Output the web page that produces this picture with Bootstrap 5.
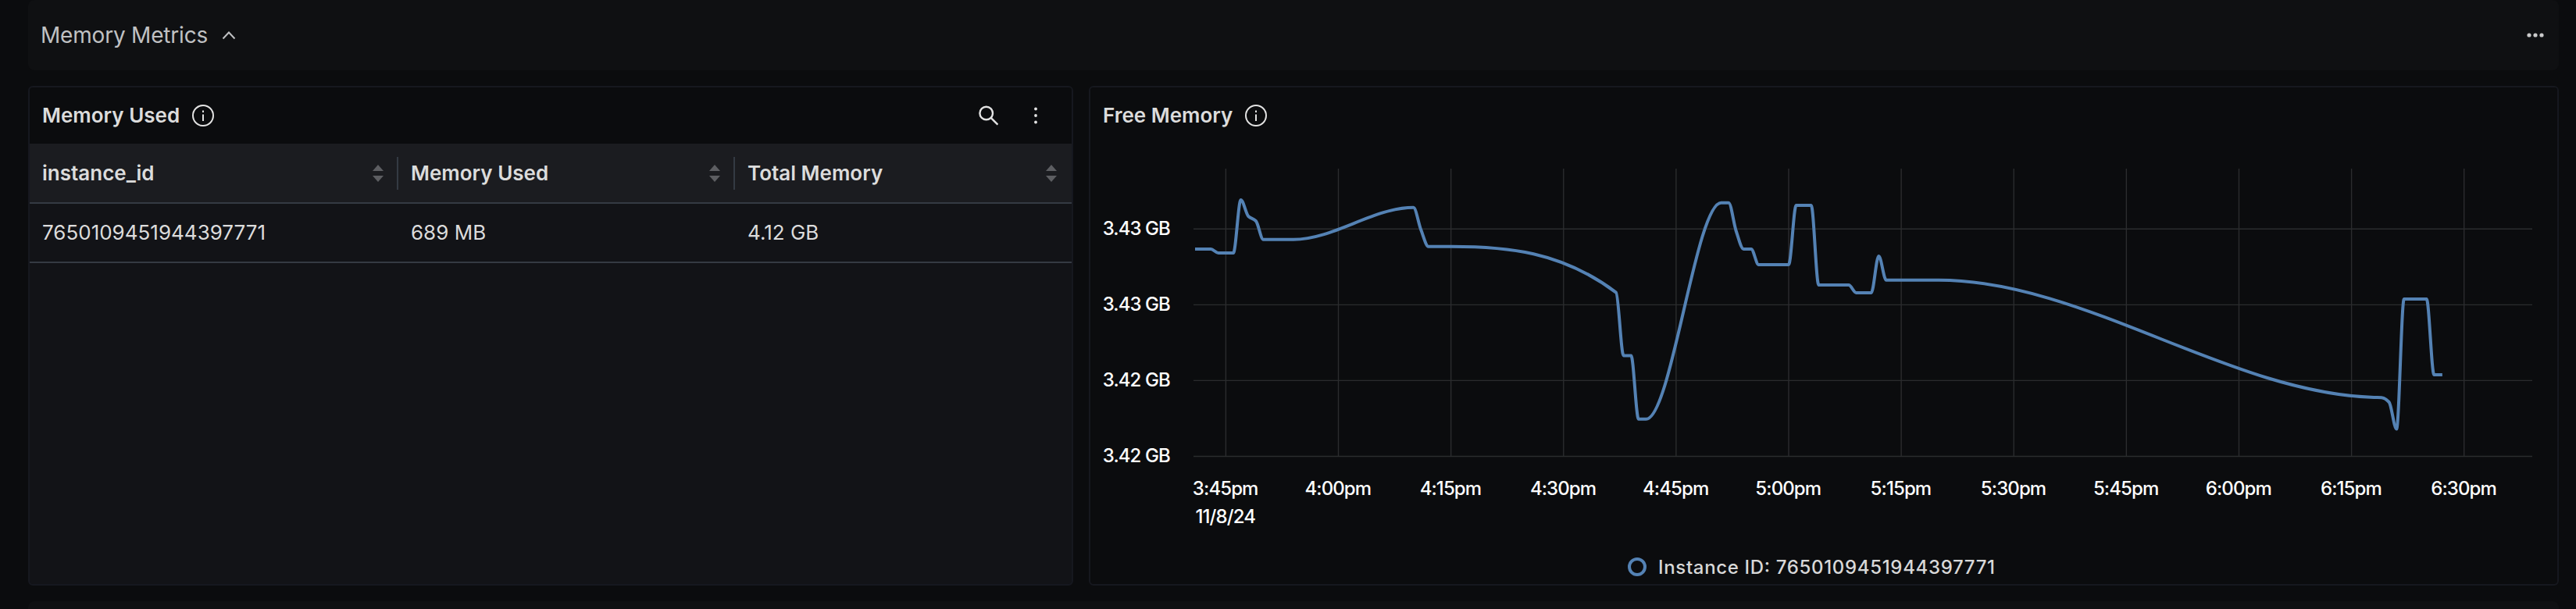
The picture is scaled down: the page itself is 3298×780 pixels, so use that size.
<!DOCTYPE html>
<html lang="en" data-bs-theme="dark">
<head>
<meta charset="utf-8">
<title>Memory Metrics</title>
<link rel="stylesheet" href="https://cdn.jsdelivr.net/npm/bootstrap@5.3.0/dist/css/bootstrap.min.css">
<style>
  body { background: #0b0c0e; color: #dcdcdc; font-family: Inter, "Liberation Sans", sans-serif; font-size: 26px; line-height: 32px; height: 780px; overflow: hidden; padding: 0 22px 0 36px; }
  .section-bar { height: 90px; background: #0f1012; border-radius: 8px; padding: 0 19px 0 16px; color: #c0c1c3; font-size: 28px; letter-spacing: -.2px; }
  .section-bar.next-bar { height: 10px; padding: 0; border-radius: 8px 8px 0 0; }
  .panels { height: 640px; margin: 20px 0; gap: 20px; }
  .panel { background: #0b0c0e; border: 2px solid #16181f; border-radius: 6px; overflow: hidden; }
  .panel-table { width: 1338px; flex: none; background: #121317; }
  .panel-head { height: 72px; padding: 0 36px 0 16px; background: #0b0c0e; font-weight: 600; }
  .metrics { table-layout: fixed; --bs-table-bg: transparent; --bs-table-color: #dcdcdc; border-color: #343a43; }
  .metrics th, .metrics td { height: 76px; padding: 0 16px; border-bottom: 2px solid #343a43; vertical-align: middle; }
  .metrics th { background: #1b1c20; font-weight: 600; }
  .metrics th .cell { height: 42px; margin-right: -16px; padding-right: 17px; border-right: 2px solid #343a43; }
  .metrics th:last-child .cell { border-color: transparent; }
  svg { display: block; flex: none; }
  .plot text { font-size: 24px; fill: #fff; font-weight: 500; letter-spacing: -.9px; }
  .plot .legend-label { fill: #d8d8d8; letter-spacing: 0; }
</style>
</head>
<body>
<header class="section-bar d-flex align-items-center justify-content-between">
  <div class="d-flex align-items-center">
    <span>Memory Metrics</span>
    <svg class="ms-3" width="20" height="20" fill="none" stroke="#c0c1c3" stroke-width="2"><path d="M3.500 14.500 11 6.500l7.500 8"/></svg>
  </div>
  <svg width="22" height="10" fill="#c9c9ca"><circle cx="3" cy="5" r="2.600"/><circle cx="11" cy="5" r="2.600"/><circle cx="19" cy="5" r="2.600"/></svg>
</header>

<main class="panels d-flex">
  <section class="panel panel-table">
    <div class="panel-head d-flex align-items-center justify-content-between">
      <div class="d-flex align-items-center">
        <span>Memory Used</span>
        <svg class="ms-3" width="28" height="28" fill="none" stroke="#e2e2e2" stroke-width="2"><circle cx="14" cy="14" r="13"/><path d="M14 12.500v8.500M14 7.500v2.500"/></svg>
      </div>
      <div class="d-flex align-items-center">
        <svg width="28" height="28" fill="none" stroke="#e2e2e2" stroke-width="2.400"><circle cx="12.700" cy="11" r="8.300"/><path d="m18.700 17 8.700 8.700"/></svg>
        <svg style="margin-left:38px" width="20" height="28" fill="#e2e2e2"><circle cx="10" cy="5.500" r="1.900"/><circle cx="10" cy="14" r="1.900"/><circle cx="10" cy="22.500" r="1.900"/></svg>
      </div>
    </div>
    <table class="table metrics mb-0">
      <colgroup><col style="width:472px"><col style="width:431px"><col style="width:431px"></colgroup>
      <thead>
        <tr>
          <th><div class="cell d-flex align-items-center justify-content-between">instance_id<svg width="14" height="22" fill="#5d5e62"><path d="M7 0l7 8H0zM0 14h14l-7 8z"/></svg></div></th>
          <th><div class="cell d-flex align-items-center justify-content-between">Memory Used<svg width="14" height="22" fill="#5d5e62"><path d="M7 0l7 8H0zM0 14h14l-7 8z"/></svg></div></th>
          <th><div class="cell d-flex align-items-center justify-content-between">Total Memory<svg width="14" height="22" fill="#5d5e62"><path d="M7 0l7 8H0zM0 14h14l-7 8z"/></svg></div></th>
        </tr>
      </thead>
      <tbody><tr><td>7650109451944397771</td><td>689 MB</td><td>4.12 GB</td></tr></tbody>
    </table>
  </section>

  <section class="panel flex-grow-1">
    <div class="panel-head d-flex align-items-center">
      <span>Free Memory</span>
      <svg class="ms-3" width="28" height="28" fill="none" stroke="#e2e2e2" stroke-width="2"><circle cx="14" cy="14" r="13"/><path d="M14 12.500v8.500M14 7.500v2.500"/></svg>
    </div>
    <!-- viewBox uses page coordinates -->
    <svg class="plot" width="1878" height="564" viewBox="1396 184 1878 564">
      <g id="grid" stroke="#2b2c2e" stroke-width="1.400"></g>
      <g id="labels"></g>
      <path id="series" fill="none" stroke="#5482b4" stroke-width="4" stroke-linejoin="round"/>
      <circle cx="2096" cy="726" r="10" fill="none" stroke="#5482b4" stroke-width="4"/>
      <text class="legend-label" x="2123" y="735" textLength="431">Instance ID: 7650109451944397771</text>
    </svg>
  </section>
</main>
<div class="section-bar next-bar"></div>

<script src="https://cdn.jsdelivr.net/npm/bootstrap@5.3.0/dist/js/bootstrap.bundle.min.js"></script>
<script>
  const ns = 'http://www.w3.org/2000/svg';
  const add = (parent, tag, attrs, text) => {
    const el = document.createElementNS(ns, tag);
    for (const k in attrs) el.setAttribute(k, attrs[k]);
    if (text) el.textContent = text;
    document.getElementById(parent).append(el);
  };
  const px = m => 1569.4 + 9.608 * m;   // minutes after 3:45pm
  ['3:45pm','4:00pm','4:15pm','4:30pm','4:45pm','5:00pm','5:15pm','5:30pm','5:45pm','6:00pm','6:15pm','6:30pm'].forEach((t, i) => {
    const x = px(i * 15);
    add('grid', 'path', { d: `M${x} 216V585` });
    add('labels', 'text', { x: x - .7, y: 634, 'text-anchor': 'middle' }, t);
  });
  add('labels', 'text', { x: 1568.7, y: 670, 'text-anchor': 'middle' }, '11/8/24');
  ['3.43 GB','3.43 GB','3.42 GB','3.42 GB'].forEach((t, i) => {
    const y = 293.3 + i * 97.05;
    add('grid', 'path', { d: `M1528 ${y}H3242` });
    add('labels', 'text', { x: 1411.8, y: y + 8, textLength: 86 }, t);
  });

  // [minute, y] samples joined by a monotone cubic spline
  const pts = [[-4.1,319],[-2,319],[-1,324],[1,324],[2,256],[3,277],[4,283],[5,306.8],[9,306.8],[25,265.8],[26,294.3],[27,315.7],[30,315.7],[52,374.6],[53,455.4],[54,455.4],[55,536.8],[56,536.8],[66,259.7],[67,259.7],[68,296],[69,319],[70,319],[71,339],[75,339],[76,263],[78,263],[79,365],[83,365],[84,375],[86,375],[87,328],[88,358.8],[95,358.8],[153,509],[154,509.2],[155,515],[156,549.5],[157,383],[160,383],[161,480],[162.1,480]].map(([m, y]) => [px(m), y]);
  const n = pts.length, dx = [], ds = [], ms = [];
  for (let i = 0; i < n - 1; i++) {
    dx[i] = pts[i + 1][0] - pts[i][0];
    ds[i] = (pts[i + 1][1] - pts[i][1]) / dx[i];
  }
  ms[0] = ds[0]; ms[n - 1] = ds[n - 2];
  for (let i = 1; i < n - 1; i++)
    ms[i] = ds[i] * ds[i - 1] <= 0 ? 0 :
      3 * (dx[i - 1] + dx[i]) / ((2 * dx[i] + dx[i - 1]) / ds[i - 1] + (dx[i] + 2 * dx[i - 1]) / ds[i]);
  let d = 'M' + pts[0];
  for (let i = 0; i < n - 1; i++) {
    const [x0, y0] = pts[i], [x1, y1] = pts[i + 1], h = dx[i] / 3;
    d += `C${x0 + h} ${y0 + ms[i] * h} ${x1 - h} ${y1 - ms[i + 1] * h} ${x1} ${y1}`;
  }
  document.getElementById('series').setAttribute('d', d);
</script>
</body>
</html>
